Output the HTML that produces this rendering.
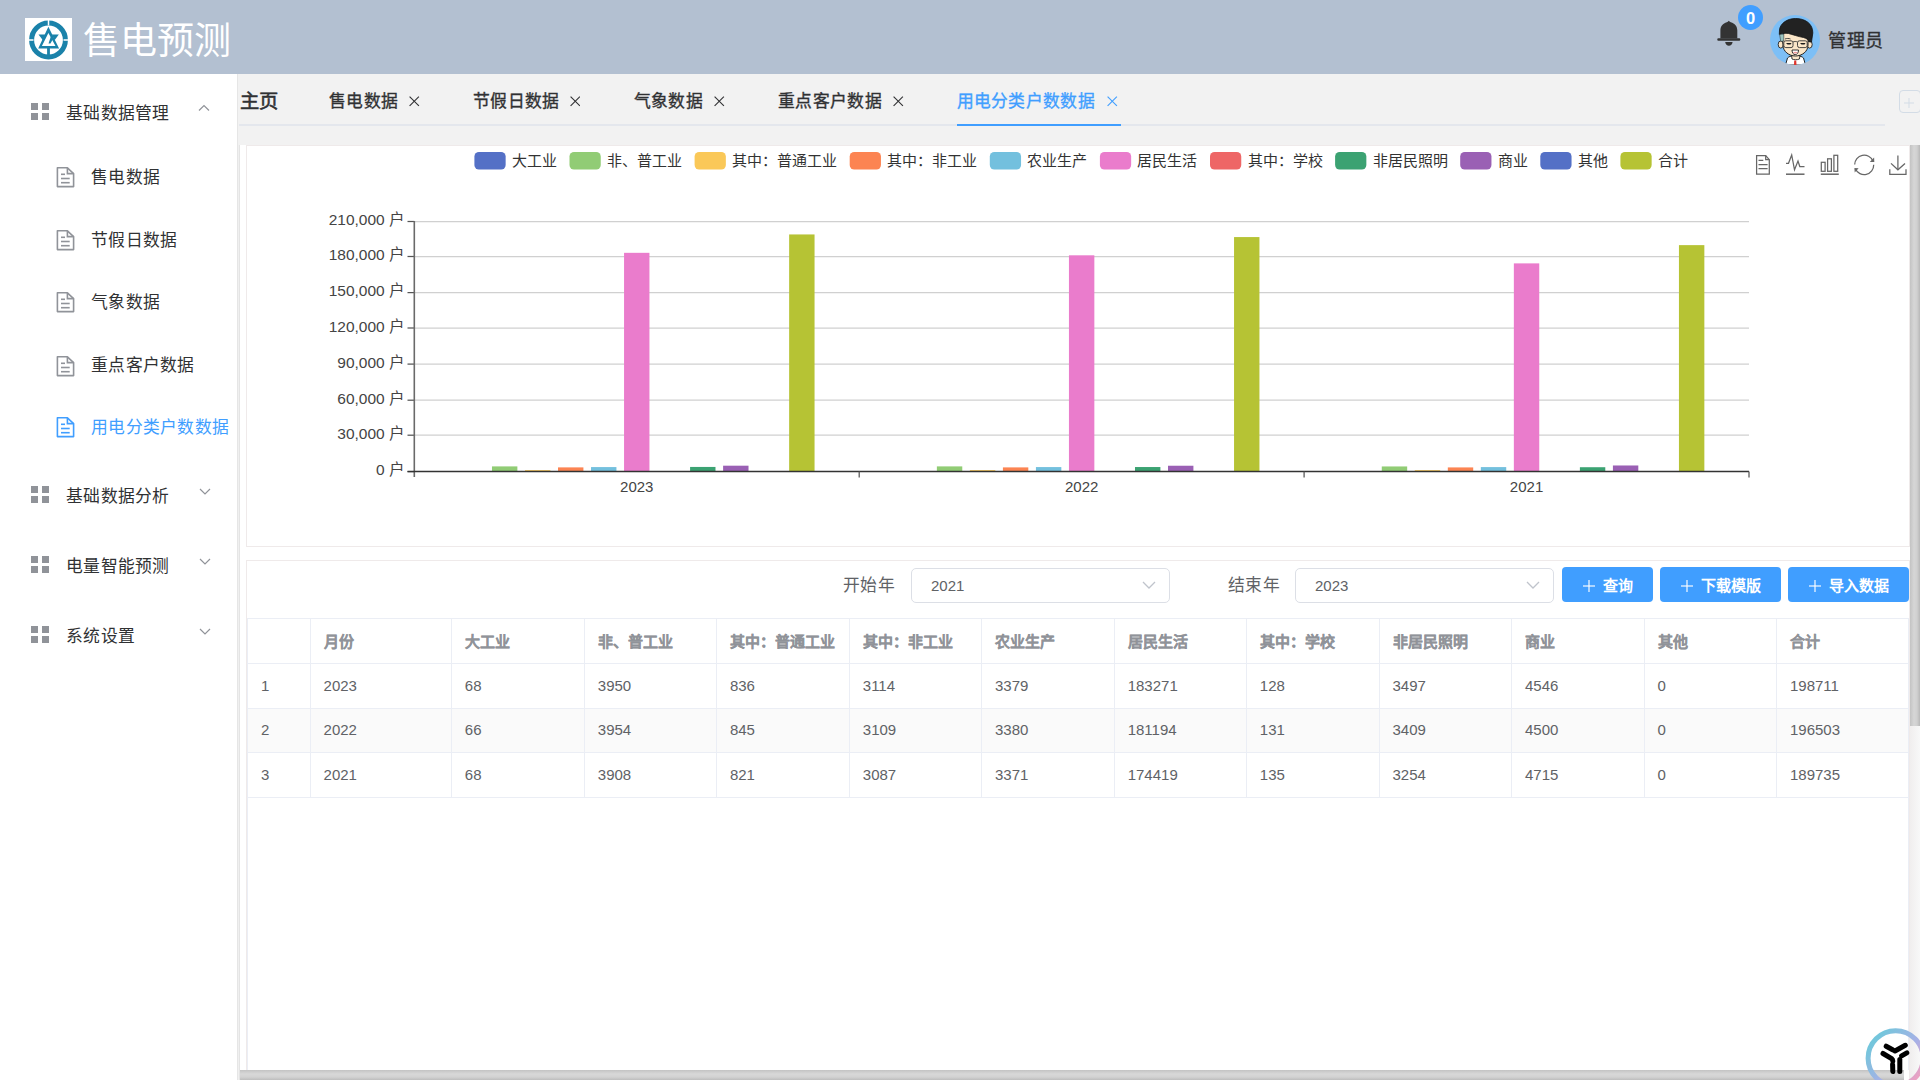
<!DOCTYPE html>
<html lang="zh-CN"><head><meta charset="utf-8"><title>售电预测</title>
<style>
*{box-sizing:border-box;margin:0;padding:0}
html,body{width:1920px;height:1080px;overflow:hidden;background:#fff;font-family:"Liberation Sans",sans-serif;color:#303133}
body{position:relative}
.a{position:absolute}
.t{position:absolute;white-space:nowrap}
.mt{left:66px;letter-spacing:0.3px;font-size:16.8px;line-height:24px;color:#303133}
.mi{left:91px;letter-spacing:0.3px;font-size:16.8px;line-height:24px;color:#303133}
.grid{position:absolute;left:31px;width:18px;height:17px}
.grid i{position:absolute;width:7.3px;height:7px;background:#909399}
.tab{top:89px;letter-spacing:0.3px;font-size:16.8px;line-height:26px;color:#303133;font-weight:400;-webkit-text-stroke:0.35px currentColor}
.th{font-size:15px;line-height:20px;color:#909399;font-weight:bold;-webkit-text-stroke:0.2px #909399}
.td{font-size:15px;line-height:20px;color:#606266}
.btn{position:absolute;top:567px;height:34.5px;background:#409eff;border-radius:4px;color:#fff;font-size:15px;font-weight:bold}
.sel{position:absolute;top:568px;height:34.5px;border:1px solid #dcdfe6;border-radius:5px;background:#fff}
</style></head>
<body>
<!-- header -->
<div class="a" style="left:0;top:0;width:1920px;height:74px;background:#b3c0d1"></div>
<div class="a" style="left:25px;top:18px;width:47px;height:43px;background:#fff"></div>
<svg class="a" style="left:25px;top:18px" width="47" height="43" viewBox="0 0 47 43">
  <circle cx="23.5" cy="22" r="16.9" fill="none" stroke="#1a82aa" stroke-width="5"/>
  <g stroke="#fff" stroke-width="1.5">
    <line x1="23.5" y1="0" x2="23.5" y2="7.5"/>
    <line x1="0" y1="22" x2="8.5" y2="22"/>
    <line x1="38.5" y1="22" x2="47" y2="22"/>
  </g>
  <g fill="#1a82aa">
    <rect x="22.1" y="29" width="2.8" height="10"/>
    <path d="M23.4 8.8 L34.1 30.6 L13.2 30.6 Z M23.4 14.9 L16.9 28.1 L30.5 28.1 Z" fill-rule="evenodd"/>
    <path d="M13.5 16.5 L20.6 16.5 L17.9 22.3 Z"/>
    <path d="M33.8 16.5 L26.6 16.5 L29.6 22.3 Z"/>
    <path d="M26.2 17.5 L28.3 20.5 L25.5 25.5 L23.5 25.5 Z"/>
  </g>
</svg>
<div class="t" style="left:83px;top:15.5px;font-size:37px;line-height:52px;color:#fff">售电预测</div>
<!-- bell -->
<svg class="a" style="left:1716px;top:19px" width="26" height="28" viewBox="0 0 26 28">
  <path d="M12.8 1.8 C13.5 2.6 14.1 3 14.8 3.3 C18.8 4.3 21.3 7.5 21.3 11.5 L21.3 19.6 L4.4 19.6 L4.4 11.5 C4.4 7.5 6.9 4.3 10.8 3.3 C11.5 3 12.1 2.6 12.8 1.8 Z" fill="#333"/>
  <rect x="1.3" y="19.2" width="23" height="2.6" rx="1.1" fill="#333"/>
  <path d="M9.2 22.9 L16.6 22.9 C16.4 25.1 14.8 26.7 12.9 26.7 C11 26.7 9.4 25.1 9.2 22.9 Z" fill="#333"/>
</svg>
<div class="a" style="left:1738px;top:5px;width:25px;height:25px;border-radius:50%;background:#409eff"></div>
<div class="t" style="left:1738px;top:6px;width:25px;height:25px;text-align:center;font-size:16.5px;line-height:25px;color:#fff;font-weight:bold">0</div>
<!-- avatar -->
<svg class="a" style="left:1770px;top:15px" width="50" height="50" viewBox="0 0 50 50">
  <defs><clipPath id="avc"><circle cx="25" cy="25" r="25"/></clipPath></defs>
  <circle cx="25" cy="25" r="25" fill="#7dbff6"/>
  <g clip-path="url(#avc)">
    <path d="M15.5 50 L17.5 43 C19 41.5 21 41 22 41 L28 41 C30 41 32 41.5 33.5 43 L35.5 50 Z" fill="#fff" stroke="#222" stroke-width="1"/>
    <path d="M21.5 39.5 L30 39.5 L29.5 44 C27 45 24 45 22 44 Z" fill="#fbe6c8" stroke="#222" stroke-width="0.9"/>
    <path d="M24.2 45.5 L26.2 45.5 L26.5 50 L24 50 Z" fill="#e0342c"/>
    <ellipse cx="10.8" cy="29.5" rx="2.6" ry="3.6" fill="#fbe6c8" stroke="#222" stroke-width="0.9"/>
    <ellipse cx="39.6" cy="29.5" rx="2.6" ry="3.6" fill="#fbe6c8" stroke="#222" stroke-width="0.9"/>
    <path d="M12.5 22 C12.5 17 17 15 25 15 C33 15 38 17 38 24 L38 30 C38 36.5 32 41 25.5 41 C19 41 13 36.5 13 30 Z" fill="#fbe6c8" stroke="#222" stroke-width="1"/>
    <path d="M9.3 19.5 L9.5 15 C10 9 16.5 3.5 25.5 3.5 C35 3.5 43 8.5 42.8 18 L41.5 27 L39.5 27 C38.5 24.5 36.5 23.5 33.5 22.5 C28 21.5 22.5 19.5 18.5 18.5 C15 18 12 18.5 9.3 19.5 Z" fill="#222" stroke="#111" stroke-width="0.8"/>
    <path d="M9.6 19.6 L13.8 18.9 L13.8 26 L10.8 26.5 Z" fill="#9cc4be" stroke="#222" stroke-width="0.5"/>
    <g fill="none" stroke="#333" stroke-width="0.9">
      <rect x="13.8" y="25.8" width="9.2" height="6.8" rx="2"/>
      <rect x="27.5" y="25.8" width="9.7" height="6.8" rx="2"/>
      <path d="M23 27 C24.5 26.3 26 26.3 27.5 27"/>
      <path d="M15 24 C16.5 23.3 19 23.3 20.5 24"/>
    </g>
    <g fill="#1a1a1a"><path d="M16 28 L21.5 28 L20.5 29.5 L17.5 29.5 Z"/><path d="M30 28 L35.5 28 L34.5 29.5 L31.5 29.5 Z"/></g>
    <path d="M22 35 L28.5 35 C28.5 38 27 39.6 25.2 39.6 C23.4 39.6 22 38 22 35 Z" fill="#fff" stroke="#222" stroke-width="0.9"/>
    <path d="M23 37.3 C24.3 36.4 26.3 36.4 27.6 37.3 C27 39 23.6 39 23 37.3 Z" fill="#f29a9a"/>
  </g>
</svg>
<div class="t" style="left:1828px;top:28px;letter-spacing:0.6px;font-size:18px;line-height:26px;color:#303133;-webkit-text-stroke:0.3px #303133">管理员</div>
<!-- sidebar -->
<div class="a" style="left:237px;top:74px;width:1px;height:1006px;background:#e6e6e6"></div>
<div class="grid" style="top:102.9px"><i style="left:0;top:0"></i><i style="left:10.5px;top:0"></i><i style="left:0;top:10.3px"></i><i style="left:10.5px;top:10.3px"></i></div>
<div class="t mt" style="top:101.7px">基础数据管理</div>
<svg class="a" style="left:198.3px;top:104.4px" width="12" height="8" viewBox="0 0 12 8"><path d="M1 6.5 L6 1.5 L11 6.5" fill="none" stroke="#909399" stroke-width="1.2"/></svg>
<div class="grid" style="top:485.7px"><i style="left:0;top:0"></i><i style="left:10.5px;top:0"></i><i style="left:0;top:10.3px"></i><i style="left:10.5px;top:10.3px"></i></div>
<div class="t mt" style="top:484.5px">基础数据分析</div>
<svg class="a" style="left:198.5px;top:488.0px" width="12" height="8" viewBox="0 0 12 8"><path d="M1 1 L6 6 L11 1" fill="none" stroke="#909399" stroke-width="1.2"/></svg>
<div class="grid" style="top:555.9px"><i style="left:0;top:0"></i><i style="left:10.5px;top:0"></i><i style="left:0;top:10.3px"></i><i style="left:10.5px;top:10.3px"></i></div>
<div class="t mt" style="top:554.7px">电量智能预测</div>
<svg class="a" style="left:198.5px;top:558.2px" width="12" height="8" viewBox="0 0 12 8"><path d="M1 1 L6 6 L11 1" fill="none" stroke="#909399" stroke-width="1.2"/></svg>
<div class="grid" style="top:626.1px"><i style="left:0;top:0"></i><i style="left:10.5px;top:0"></i><i style="left:0;top:10.3px"></i><i style="left:10.5px;top:10.3px"></i></div>
<div class="t mt" style="top:624.9px">系统设置</div>
<svg class="a" style="left:198.5px;top:628.4px" width="12" height="8" viewBox="0 0 12 8"><path d="M1 1 L6 6 L11 1" fill="none" stroke="#909399" stroke-width="1.2"/></svg>
<svg class="a" style="left:56px;top:167.3px" width="19" height="21" viewBox="0 0 19 21"><path d="M1.4 0.8 L11.4 0.8 L17.6 6.6 L17.6 19.6 L1.4 19.6 Z" fill="none" stroke="#909399" stroke-width="1.6" stroke-linejoin="round"/><path d="M11.4 0.8 L11.4 6.6 L17.6 6.6" fill="none" stroke="#909399" stroke-width="1.6"/><g stroke="#909399" stroke-width="1.6"><line x1="5" y1="7.3" x2="9" y2="7.3"/><line x1="5" y1="11.5" x2="13.7" y2="11.5"/><line x1="5" y1="15.7" x2="13.7" y2="15.7"/></g></svg>
<div class="t mi" style="top:165.7px;color:#303133">售电数据</div>
<svg class="a" style="left:56px;top:230.2px" width="19" height="21" viewBox="0 0 19 21"><path d="M1.4 0.8 L11.4 0.8 L17.6 6.6 L17.6 19.6 L1.4 19.6 Z" fill="none" stroke="#909399" stroke-width="1.6" stroke-linejoin="round"/><path d="M11.4 0.8 L11.4 6.6 L17.6 6.6" fill="none" stroke="#909399" stroke-width="1.6"/><g stroke="#909399" stroke-width="1.6"><line x1="5" y1="7.3" x2="9" y2="7.3"/><line x1="5" y1="11.5" x2="13.7" y2="11.5"/><line x1="5" y1="15.7" x2="13.7" y2="15.7"/></g></svg>
<div class="t mi" style="top:228.6px;color:#303133">节假日数据</div>
<svg class="a" style="left:56px;top:292.2px" width="19" height="21" viewBox="0 0 19 21"><path d="M1.4 0.8 L11.4 0.8 L17.6 6.6 L17.6 19.6 L1.4 19.6 Z" fill="none" stroke="#909399" stroke-width="1.6" stroke-linejoin="round"/><path d="M11.4 0.8 L11.4 6.6 L17.6 6.6" fill="none" stroke="#909399" stroke-width="1.6"/><g stroke="#909399" stroke-width="1.6"><line x1="5" y1="7.3" x2="9" y2="7.3"/><line x1="5" y1="11.5" x2="13.7" y2="11.5"/><line x1="5" y1="15.7" x2="13.7" y2="15.7"/></g></svg>
<div class="t mi" style="top:290.6px;color:#303133">气象数据</div>
<svg class="a" style="left:56px;top:355.8px" width="19" height="21" viewBox="0 0 19 21"><path d="M1.4 0.8 L11.4 0.8 L17.6 6.6 L17.6 19.6 L1.4 19.6 Z" fill="none" stroke="#909399" stroke-width="1.6" stroke-linejoin="round"/><path d="M11.4 0.8 L11.4 6.6 L17.6 6.6" fill="none" stroke="#909399" stroke-width="1.6"/><g stroke="#909399" stroke-width="1.6"><line x1="5" y1="7.3" x2="9" y2="7.3"/><line x1="5" y1="11.5" x2="13.7" y2="11.5"/><line x1="5" y1="15.7" x2="13.7" y2="15.7"/></g></svg>
<div class="t mi" style="top:354.2px;color:#303133">重点客户数据</div>
<svg class="a" style="left:56px;top:417.4px" width="19" height="21" viewBox="0 0 19 21"><path d="M1.4 0.8 L11.4 0.8 L17.6 6.6 L17.6 19.6 L1.4 19.6 Z" fill="none" stroke="#409eff" stroke-width="1.6" stroke-linejoin="round"/><path d="M11.4 0.8 L11.4 6.6 L17.6 6.6" fill="none" stroke="#409eff" stroke-width="1.6"/><g stroke="#409eff" stroke-width="1.6"><line x1="5" y1="7.3" x2="9" y2="7.3"/><line x1="5" y1="11.5" x2="13.7" y2="11.5"/><line x1="5" y1="15.7" x2="13.7" y2="15.7"/></g></svg>
<div class="t mi" style="top:415.8px;color:#409eff">用电分类户数数据</div>
<!-- tabbar -->
<div class="a" style="left:238px;top:74px;width:1682px;height:71px;background:#f2f2f2"></div>
<div class="a" style="left:239px;top:124px;width:1646px;height:2px;background:#e4e7ed"></div>
<div class="a" style="left:956.5px;top:123.5px;width:164px;height:2.5px;background:#409eff"></div>
<div class="a" style="left:1898.5px;top:90px;width:22px;height:22.5px;border:1px solid #d3dce6;border-radius:4px"></div>
<svg class="a" style="left:1903px;top:97px" width="12" height="12" viewBox="0 0 12 12"><g stroke="#d3dce6" stroke-width="1"><line x1="1" y1="6" x2="11" y2="6"/><line x1="6" y1="1" x2="6" y2="11"/></g></svg>
<div class="t tab" style="left:240.2px;top:88.5px;font-size:19.3px;font-weight:400;-webkit-text-stroke:0.55px #303133;color:#303133">主页</div>
<div class="t tab" style="left:329.2px;color:#303133">售电数据</div>
<svg class="a" style="left:409.2px;top:96px" width="10.5" height="10.5" viewBox="0 0 10.5 10.5"><g stroke="#303133" stroke-width="1.1"><line x1="0.6" y1="0.6" x2="9.9" y2="9.9"/><line x1="9.9" y1="0.6" x2="0.6" y2="9.9"/></g></svg>
<div class="t tab" style="left:473.0px;color:#303133">节假日数据</div>
<svg class="a" style="left:569.8px;top:96px" width="10.5" height="10.5" viewBox="0 0 10.5 10.5"><g stroke="#303133" stroke-width="1.1"><line x1="0.6" y1="0.6" x2="9.9" y2="9.9"/><line x1="9.9" y1="0.6" x2="0.6" y2="9.9"/></g></svg>
<div class="t tab" style="left:633.9px;color:#303133">气象数据</div>
<svg class="a" style="left:714.0px;top:96px" width="10.5" height="10.5" viewBox="0 0 10.5 10.5"><g stroke="#303133" stroke-width="1.1"><line x1="0.6" y1="0.6" x2="9.9" y2="9.9"/><line x1="9.9" y1="0.6" x2="0.6" y2="9.9"/></g></svg>
<div class="t tab" style="left:778.1px;color:#303133">重点客户数据</div>
<svg class="a" style="left:893.2px;top:96px" width="10.5" height="10.5" viewBox="0 0 10.5 10.5"><g stroke="#303133" stroke-width="1.1"><line x1="0.6" y1="0.6" x2="9.9" y2="9.9"/><line x1="9.9" y1="0.6" x2="0.6" y2="9.9"/></g></svg>
<div class="t tab" style="left:956.5px;color:#409eff">用电分类户数数据</div>
<svg class="a" style="left:1107.2px;top:96px" width="10.5" height="10.5" viewBox="0 0 10.5 10.5"><g stroke="#409eff" stroke-width="1.1"><line x1="0.6" y1="0.6" x2="9.9" y2="9.9"/><line x1="9.9" y1="0.6" x2="0.6" y2="9.9"/></g></svg>
<!-- content -->
<div class="a" style="left:238px;top:145px;width:1px;height:935px;background:#f0f0f0"></div>
<div class="a" style="left:239px;top:145px;width:1px;height:935px;background:#e4e4e4"></div>
<div class="a" style="left:246px;top:145px;width:1664px;height:402px;border:1px solid #efeaea"></div>
<div class="a" style="left:246px;top:559.5px;width:1664px;height:600px;border:1px solid #efeaea"></div>
<div class="t" style="left:843px;top:574px;font-size:16.8px;letter-spacing:0.3px;line-height:24px;color:#606266">开始年</div>
<div class="sel" style="left:911px;width:259px"></div>
<div class="t" style="left:931px;top:576px;font-size:15px;line-height:20px;color:#606266">2021</div>
<svg class="a" style="left:1142px;top:580.5px" width="14" height="8" viewBox="0 0 14 8"><path d="M1 1 L7 7 L13 1" fill="none" stroke="#c0c4cc" stroke-width="1.3"/></svg>
<div class="t" style="left:1228px;top:574px;font-size:16.8px;letter-spacing:0.3px;line-height:24px;color:#606266">结束年</div>
<div class="sel" style="left:1295px;width:259px"></div>
<div class="t" style="left:1315px;top:576px;font-size:15px;line-height:20px;color:#606266">2023</div>
<svg class="a" style="left:1526px;top:580.5px" width="14" height="8" viewBox="0 0 14 8"><path d="M1 1 L7 7 L13 1" fill="none" stroke="#c0c4cc" stroke-width="1.3"/></svg>
<div class="btn" style="left:1562px;width:91px"></div>
<svg class="a" style="left:1582.5px;top:579.5px" width="12" height="12" viewBox="0 0 12 12"><g stroke="#fff" stroke-width="1.15"><line x1="0" y1="6" x2="12" y2="6"/><line x1="6" y1="0" x2="6" y2="12"/></g></svg>
<div class="t" style="left:1602.5px;top:575.5px;font-size:15px;line-height:20px;color:#fff;font-weight:bold">查询</div>
<div class="btn" style="left:1660px;width:121px"></div>
<svg class="a" style="left:1680.5px;top:579.5px" width="12" height="12" viewBox="0 0 12 12"><g stroke="#fff" stroke-width="1.15"><line x1="0" y1="6" x2="12" y2="6"/><line x1="6" y1="0" x2="6" y2="12"/></g></svg>
<div class="t" style="left:1700.5px;top:575.5px;font-size:15px;line-height:20px;color:#fff;font-weight:bold">下载模版</div>
<div class="btn" style="left:1788px;width:121px"></div>
<svg class="a" style="left:1808.5px;top:579.5px" width="12" height="12" viewBox="0 0 12 12"><g stroke="#fff" stroke-width="1.15"><line x1="0" y1="6" x2="12" y2="6"/><line x1="6" y1="0" x2="6" y2="12"/></g></svg>
<div class="t" style="left:1828.5px;top:575.5px;font-size:15px;line-height:20px;color:#fff;font-weight:bold">导入数据</div>
<div class="a" style="left:247.5px;top:708.2px;width:1661px;height:44px;background:#fafafa"></div>
<div class="a" style="left:247.5px;top:617.5px;width:1661px;height:1px;background:#ebeef5"></div>
<div class="a" style="left:247.5px;top:662.7px;width:1661px;height:1px;background:#ebeef5"></div>
<div class="a" style="left:247.5px;top:707.7px;width:1661px;height:1px;background:#ebeef5"></div>
<div class="a" style="left:247.5px;top:751.7px;width:1661px;height:1px;background:#ebeef5"></div>
<div class="a" style="left:247.5px;top:796.8px;width:1661px;height:1px;background:#ebeef5"></div>
<div class="a" style="left:247px;top:618px;width:1px;height:452px;background:#ebeef5"></div>
<div class="a" style="left:309.6px;top:618px;width:1px;height:179.3px;background:#ebeef5"></div>
<div class="a" style="left:450.8px;top:618px;width:1px;height:179.3px;background:#ebeef5"></div>
<div class="a" style="left:583.8px;top:618px;width:1px;height:179.3px;background:#ebeef5"></div>
<div class="a" style="left:715.9px;top:618px;width:1px;height:179.3px;background:#ebeef5"></div>
<div class="a" style="left:848.8px;top:618px;width:1px;height:179.3px;background:#ebeef5"></div>
<div class="a" style="left:981.0px;top:618px;width:1px;height:179.3px;background:#ebeef5"></div>
<div class="a" style="left:1113.7px;top:618px;width:1px;height:179.3px;background:#ebeef5"></div>
<div class="a" style="left:1245.8px;top:618px;width:1px;height:179.3px;background:#ebeef5"></div>
<div class="a" style="left:1378.5px;top:618px;width:1px;height:179.3px;background:#ebeef5"></div>
<div class="a" style="left:1511.0px;top:618px;width:1px;height:179.3px;background:#ebeef5"></div>
<div class="a" style="left:1643.5px;top:618px;width:1px;height:179.3px;background:#ebeef5"></div>
<div class="a" style="left:1776.0px;top:618px;width:1px;height:179.3px;background:#ebeef5"></div>
<div class="a" style="left:1908px;top:618px;width:1px;height:452px;background:#ebeef5"></div>
<div class="t th" style="left:323.6px;top:631.8px">月份</div>
<div class="t th" style="left:464.8px;top:631.8px">大工业</div>
<div class="t th" style="left:597.8px;top:631.8px">非、普工业</div>
<div class="t th" style="left:729.9px;top:631.8px">其中：普通工业</div>
<div class="t th" style="left:862.8px;top:631.8px">其中：非工业</div>
<div class="t th" style="left:995.0px;top:631.8px">农业生产</div>
<div class="t th" style="left:1127.7px;top:631.8px">居民生活</div>
<div class="t th" style="left:1259.8px;top:631.8px">其中：学校</div>
<div class="t th" style="left:1392.5px;top:631.8px">非居民照明</div>
<div class="t th" style="left:1525.0px;top:631.8px">商业</div>
<div class="t th" style="left:1657.5px;top:631.8px">其他</div>
<div class="t th" style="left:1790.0px;top:631.8px">合计</div>
<div class="t td" style="left:261.0px;top:675.8px">1</div>
<div class="t td" style="left:323.6px;top:675.8px">2023</div>
<div class="t td" style="left:464.8px;top:675.8px">68</div>
<div class="t td" style="left:597.8px;top:675.8px">3950</div>
<div class="t td" style="left:729.9px;top:675.8px">836</div>
<div class="t td" style="left:862.8px;top:675.8px">3114</div>
<div class="t td" style="left:995.0px;top:675.8px">3379</div>
<div class="t td" style="left:1127.7px;top:675.8px">183271</div>
<div class="t td" style="left:1259.8px;top:675.8px">128</div>
<div class="t td" style="left:1392.5px;top:675.8px">3497</div>
<div class="t td" style="left:1525.0px;top:675.8px">4546</div>
<div class="t td" style="left:1657.5px;top:675.8px">0</div>
<div class="t td" style="left:1790.0px;top:675.8px">198711</div>
<div class="t td" style="left:261.0px;top:720.0px">2</div>
<div class="t td" style="left:323.6px;top:720.0px">2022</div>
<div class="t td" style="left:464.8px;top:720.0px">66</div>
<div class="t td" style="left:597.8px;top:720.0px">3954</div>
<div class="t td" style="left:729.9px;top:720.0px">845</div>
<div class="t td" style="left:862.8px;top:720.0px">3109</div>
<div class="t td" style="left:995.0px;top:720.0px">3380</div>
<div class="t td" style="left:1127.7px;top:720.0px">181194</div>
<div class="t td" style="left:1259.8px;top:720.0px">131</div>
<div class="t td" style="left:1392.5px;top:720.0px">3409</div>
<div class="t td" style="left:1525.0px;top:720.0px">4500</div>
<div class="t td" style="left:1657.5px;top:720.0px">0</div>
<div class="t td" style="left:1790.0px;top:720.0px">196503</div>
<div class="t td" style="left:261.0px;top:765.0px">3</div>
<div class="t td" style="left:323.6px;top:765.0px">2021</div>
<div class="t td" style="left:464.8px;top:765.0px">68</div>
<div class="t td" style="left:597.8px;top:765.0px">3908</div>
<div class="t td" style="left:729.9px;top:765.0px">821</div>
<div class="t td" style="left:862.8px;top:765.0px">3087</div>
<div class="t td" style="left:995.0px;top:765.0px">3371</div>
<div class="t td" style="left:1127.7px;top:765.0px">174419</div>
<div class="t td" style="left:1259.8px;top:765.0px">135</div>
<div class="t td" style="left:1392.5px;top:765.0px">3254</div>
<div class="t td" style="left:1525.0px;top:765.0px">4715</div>
<div class="t td" style="left:1657.5px;top:765.0px">0</div>
<div class="t td" style="left:1790.0px;top:765.0px">189735</div>
<div class="a" style="left:1910px;top:145px;width:10px;height:935px;background:linear-gradient(90deg,#f0eeee,#f8f8f8)"></div>
<div class="a" style="left:1910px;top:145px;width:10px;height:581px;background:linear-gradient(90deg,#c3c3c3,#d6d6d6 40%,#d0d0d0 70%,#b8b8b8)"></div>
<div class="a" style="left:240px;top:1070px;width:1664px;height:10px;background:linear-gradient(180deg,#c3c3c3,#d8d8d8 40%,#d2d2d2 70%,#bdbdbd)"></div>
<!-- chart -->
<svg class="a" style="left:0;top:0;pointer-events:none" width="1920" height="560" viewBox="0 0 1920 560">
<rect x="474.40" y="152" width="31.25" height="17.5" rx="4.5" fill="#5470c6"/>
<text x="511.90" y="165.8" font-size="15" fill="#333">大工业</text>
<rect x="569.50" y="152" width="31.25" height="17.5" rx="4.5" fill="#91cc75"/>
<text x="607.00" y="165.8" font-size="15" fill="#333">非、普工业</text>
<rect x="694.60" y="152" width="31.25" height="17.5" rx="4.5" fill="#fac858"/>
<text x="732.10" y="165.8" font-size="15" fill="#333">其中：普通工业</text>
<rect x="849.70" y="152" width="31.25" height="17.5" rx="4.5" fill="#fc8452"/>
<text x="887.20" y="165.8" font-size="15" fill="#333">其中：非工业</text>
<rect x="989.80" y="152" width="31.25" height="17.5" rx="4.5" fill="#73c0de"/>
<text x="1027.30" y="165.8" font-size="15" fill="#333">农业生产</text>
<rect x="1099.90" y="152" width="31.25" height="17.5" rx="4.5" fill="#ea7ccc"/>
<text x="1137.40" y="165.8" font-size="15" fill="#333">居民生活</text>
<rect x="1210.00" y="152" width="31.25" height="17.5" rx="4.5" fill="#ee6666"/>
<text x="1247.50" y="165.8" font-size="15" fill="#333">其中：学校</text>
<rect x="1335.10" y="152" width="31.25" height="17.5" rx="4.5" fill="#3ba272"/>
<text x="1372.60" y="165.8" font-size="15" fill="#333">非居民照明</text>
<rect x="1460.20" y="152" width="31.25" height="17.5" rx="4.5" fill="#9a60b4"/>
<text x="1497.70" y="165.8" font-size="15" fill="#333">商业</text>
<rect x="1540.30" y="152" width="31.25" height="17.5" rx="4.5" fill="#5470c6"/>
<text x="1577.80" y="165.8" font-size="15" fill="#333">其他</text>
<rect x="1620.40" y="152" width="31.25" height="17.5" rx="4.5" fill="#b6c334"/>
<text x="1657.90" y="165.8" font-size="15" fill="#333">合计</text>
<text x="405" y="475.4" font-size="15.5" fill="#444" text-anchor="end">0 户</text>
<text x="405" y="439.0" font-size="15.5" fill="#444" text-anchor="end">30,000 户</text>
<text x="405" y="404.0" font-size="15.5" fill="#444" text-anchor="end">60,000 户</text>
<text x="405" y="367.9" font-size="15.5" fill="#444" text-anchor="end">90,000 户</text>
<text x="405" y="331.8" font-size="15.5" fill="#444" text-anchor="end">120,000 户</text>
<text x="405" y="296.4" font-size="15.5" fill="#444" text-anchor="end">150,000 户</text>
<text x="405" y="260.3" font-size="15.5" fill="#444" text-anchor="end">180,000 户</text>
<text x="405" y="225.3" font-size="15.5" fill="#444" text-anchor="end">210,000 户</text>
<line x1="407.5" y1="471.6" x2="414.3" y2="471.6" stroke="#555" stroke-width="1.25"/>
<line x1="414.3" y1="435.2" x2="1749" y2="435.2" stroke="#d0d0d0" stroke-width="1.25"/>
<line x1="407.5" y1="435.2" x2="414.3" y2="435.2" stroke="#555" stroke-width="1.25"/>
<line x1="414.3" y1="400.2" x2="1749" y2="400.2" stroke="#d0d0d0" stroke-width="1.25"/>
<line x1="407.5" y1="400.2" x2="414.3" y2="400.2" stroke="#555" stroke-width="1.25"/>
<line x1="414.3" y1="364.1" x2="1749" y2="364.1" stroke="#d0d0d0" stroke-width="1.25"/>
<line x1="407.5" y1="364.1" x2="414.3" y2="364.1" stroke="#555" stroke-width="1.25"/>
<line x1="414.3" y1="328" x2="1749" y2="328" stroke="#d0d0d0" stroke-width="1.25"/>
<line x1="407.5" y1="328" x2="414.3" y2="328" stroke="#555" stroke-width="1.25"/>
<line x1="414.3" y1="292.6" x2="1749" y2="292.6" stroke="#d0d0d0" stroke-width="1.25"/>
<line x1="407.5" y1="292.6" x2="414.3" y2="292.6" stroke="#555" stroke-width="1.25"/>
<line x1="414.3" y1="256.5" x2="1749" y2="256.5" stroke="#d0d0d0" stroke-width="1.25"/>
<line x1="407.5" y1="256.5" x2="414.3" y2="256.5" stroke="#555" stroke-width="1.25"/>
<line x1="414.3" y1="221.5" x2="1749" y2="221.5" stroke="#d0d0d0" stroke-width="1.25"/>
<line x1="407.5" y1="221.5" x2="414.3" y2="221.5" stroke="#555" stroke-width="1.25"/>
<rect x="491.97" y="466.40" width="25.4" height="5.20" fill="#91cc75"/>
<rect x="524.99" y="470.10" width="25.4" height="1.50" fill="#fac858"/>
<rect x="558.01" y="467.39" width="25.4" height="4.21" fill="#fc8452"/>
<rect x="591.03" y="467.08" width="25.4" height="4.52" fill="#73c0de"/>
<rect x="624.05" y="252.83" width="25.4" height="218.77" fill="#ea7ccc"/>
<rect x="657.07" y="471.20" width="25.4" height="0.4" fill="#ee6666" opacity="0.5"/>
<rect x="690.09" y="466.94" width="25.4" height="4.66" fill="#3ba272"/>
<rect x="723.11" y="465.69" width="25.4" height="5.91" fill="#9a60b4"/>
<rect x="789.15" y="234.44" width="25.4" height="237.16" fill="#b6c334"/>
<text x="636.75" y="491.7" font-size="15" fill="#444" text-anchor="middle">2023</text>
<rect x="936.87" y="466.39" width="25.4" height="5.21" fill="#91cc75"/>
<rect x="969.89" y="470.09" width="25.4" height="1.51" fill="#fac858"/>
<rect x="1002.91" y="467.40" width="25.4" height="4.20" fill="#fc8452"/>
<rect x="1035.93" y="467.07" width="25.4" height="4.53" fill="#73c0de"/>
<rect x="1068.95" y="255.31" width="25.4" height="216.29" fill="#ea7ccc"/>
<rect x="1101.97" y="471.20" width="25.4" height="0.4" fill="#ee6666" opacity="0.5"/>
<rect x="1134.99" y="467.04" width="25.4" height="4.56" fill="#3ba272"/>
<rect x="1168.01" y="465.74" width="25.4" height="5.86" fill="#9a60b4"/>
<rect x="1234.05" y="237.07" width="25.4" height="234.53" fill="#b6c334"/>
<text x="1081.65" y="491.7" font-size="15" fill="#444" text-anchor="middle">2022</text>
<rect x="1381.77" y="466.45" width="25.4" height="5.15" fill="#91cc75"/>
<rect x="1414.79" y="470.12" width="25.4" height="1.48" fill="#fac858"/>
<rect x="1447.81" y="467.42" width="25.4" height="4.18" fill="#fc8452"/>
<rect x="1480.83" y="467.09" width="25.4" height="4.51" fill="#73c0de"/>
<rect x="1513.85" y="263.38" width="25.4" height="208.22" fill="#ea7ccc"/>
<rect x="1546.87" y="471.20" width="25.4" height="0.4" fill="#ee6666" opacity="0.5"/>
<rect x="1579.89" y="467.22" width="25.4" height="4.38" fill="#3ba272"/>
<rect x="1612.91" y="465.48" width="25.4" height="6.12" fill="#9a60b4"/>
<rect x="1678.95" y="245.13" width="25.4" height="226.47" fill="#b6c334"/>
<text x="1526.55" y="491.7" font-size="15" fill="#444" text-anchor="middle">2021</text>
<line x1="414.3" y1="221" x2="414.3" y2="477" stroke="#6a6a6a" stroke-width="1.6"/>
<line x1="407.5" y1="471.6" x2="1749" y2="471.6" stroke="#333" stroke-width="1.5"/>
<line x1="859.20" y1="471.6" x2="859.20" y2="477.5" stroke="#555" stroke-width="1.25"/>
<line x1="1304.10" y1="471.6" x2="1304.10" y2="477.5" stroke="#555" stroke-width="1.25"/>
<line x1="1749.00" y1="471.6" x2="1749.00" y2="477.5" stroke="#555" stroke-width="1.25"/>
<g fill="none" stroke="#666" stroke-width="1.25"><path d="M1756.6 155.6 L1765.7 155.6 L1769.3 159.7 L1769.3 174 L1756.6 174 Z"/><path d="M1765.7 155.6 L1765.7 159.7 L1769.3 159.7"/><path d="M1758.5 160.3 L1763.3 160.3 M1758.5 164.6 L1767.6 164.6 M1758.5 168.5 L1767.6 168.5"/></g>
<g fill="none" stroke="#666" stroke-width="1.25"><path d="M1786 163.3 L1788.5 163.3 L1791.7 155 L1794.5 169.8 L1798 161 L1799.8 166.5 L1804.5 166.5"/><line x1="1786" y1="174.2" x2="1804.5" y2="174.2" stroke-width="1.5"/></g>
<g fill="none" stroke="#666" stroke-width="1.25"><rect x="1821.3" y="162.3" width="3.8" height="9"/><rect x="1827.6" y="158.8" width="3.8" height="12.5"/><rect x="1833.9" y="155.3" width="3.8" height="16"/><line x1="1820.8" y1="174.2" x2="1838.8" y2="174.2" stroke-width="1.5"/></g>
<g fill="none" stroke="#666" stroke-width="1.25"><path d="M1854.7 164.6 A9.5 9.5 0 0 1 1872.9 160.9"/><path d="M1873.7 164.8 A9.5 9.5 0 0 1 1855.5 168.9"/></g><path d="M1869.8 162 L1874.3 162 L1874.1 157.5 Z" fill="#666"/><path d="M1858.6 168.2 L1854.4 168 L1854.7 172.4 Z" fill="#666"/>
<g fill="none" stroke="#666" stroke-width="1.25"><line x1="1897.9" y1="155.5" x2="1897.9" y2="170"/><path d="M1891 163.4 L1897.9 169.8 L1905 163.5"/><path d="M1889.8 169.3 L1889.8 174.3 L1906 174.3 L1906 169.3"/></g>
</svg>
<!-- floating widget -->
<svg class="a" style="left:1862px;top:1024px" width="58" height="56" viewBox="0 0 58 56">
  <defs><linearGradient id="wg" x1="0.1" y1="0.2" x2="0.9" y2="0.9"><stop offset="0" stop-color="#74c6dc"/><stop offset="0.55" stop-color="#a8b0e6"/><stop offset="1" stop-color="#f0a0c0"/></linearGradient></defs>
  <circle cx="33.6" cy="34.3" r="27.5" fill="none" stroke="url(#wg)" stroke-width="5"/>
  <g fill="none" stroke="#000" stroke-width="5" stroke-linecap="round">
    <path d="M24.2 22.2 L30.6 25.8"/>
    <path d="M33 27 L43.3 21.3"/>
    <path d="M21 29.5 L29.6 34.6 C30.6 35.3 30.8 36 30.8 37"/>
    <path d="M44.8 28.8 L39.6 31.8"/>
    <path d="M30.6 40.5 L30.8 47.5"/>
    <path d="M37.8 35.5 L37.8 47.5"/>
  </g>
</svg>
</body></html>
